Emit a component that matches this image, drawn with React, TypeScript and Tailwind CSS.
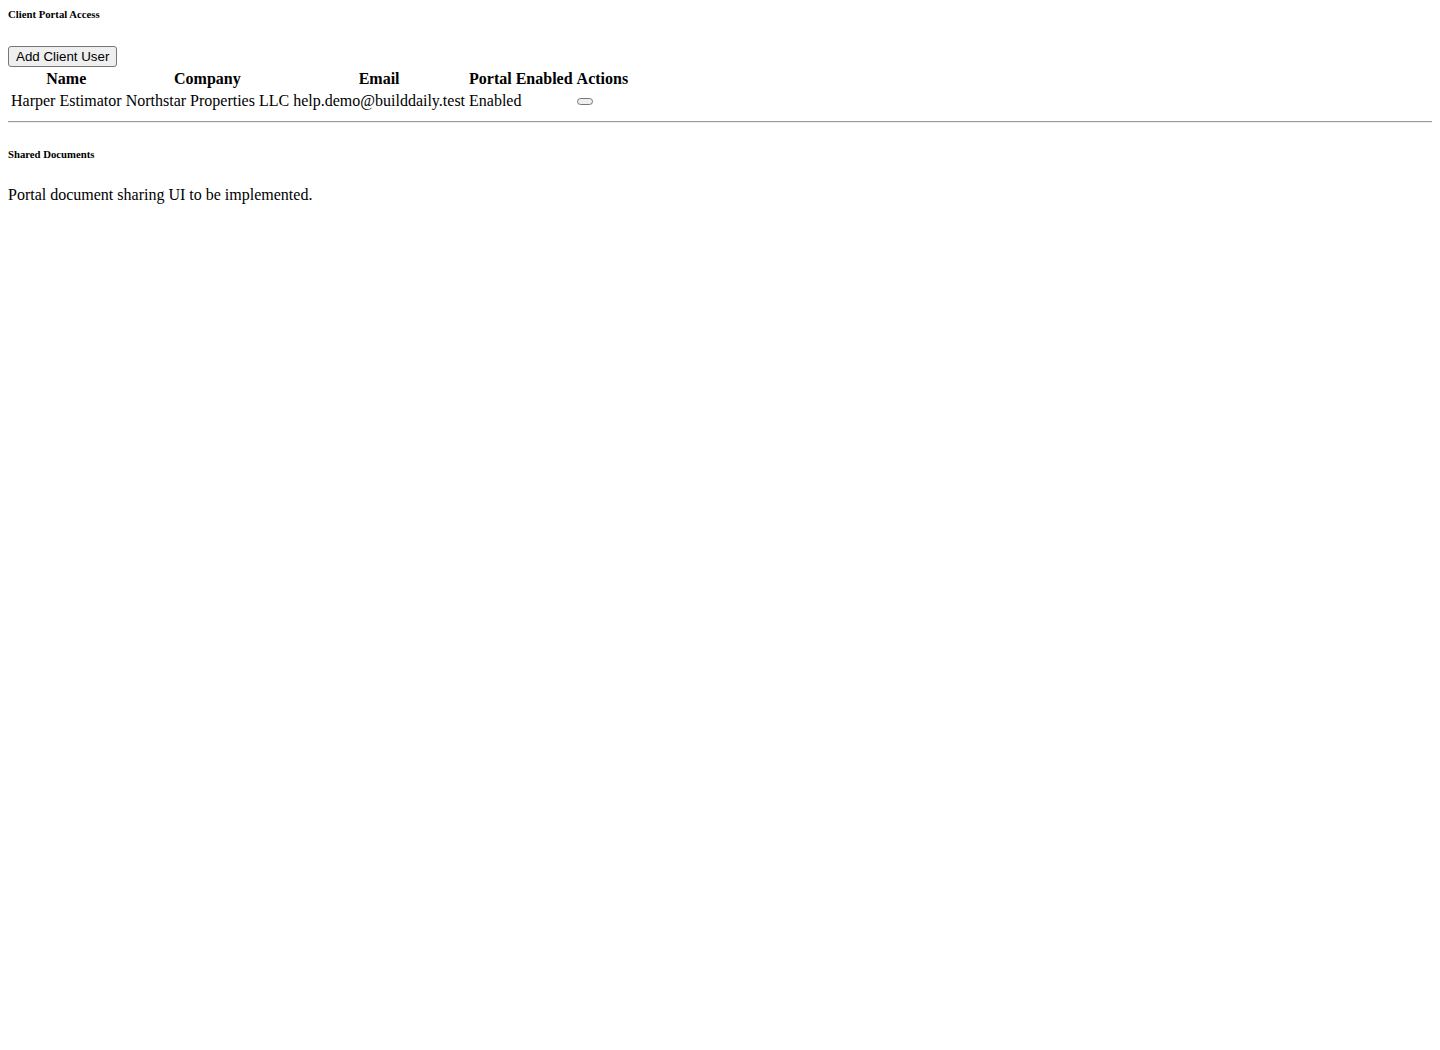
export default function App() {
  const serif = { fontFamily: '"Liberation Serif", "Times New Roman", serif' };
  return (
    <div className="min-h-screen bg-white p-2 text-black leading-[normal]" style={serif}>
      <h6 className="text-[10.72px] font-bold leading-[normal] mb-[26px]">Client Portal Access</h6>

      <div className="flex">
        <button
          className="h-[21px] rounded-[3px] border border-[#767676] bg-[#efefef] px-[7px] text-[13.33px] leading-none text-black"
          style={{ fontFamily: '"Liberation Sans", Arial, sans-serif' }}
        >
          Add Client User
        </button>
      </div>

      <table className="border-separate border-spacing-[2px] text-[16px] leading-[normal]">
        <thead>
          <tr>
            <th className="p-px text-center font-bold">Name</th>
            <th className="p-px text-center font-bold">Company</th>
            <th className="p-px text-center font-bold">Email</th>
            <th className="p-px text-center font-bold">Portal Enabled</th>
            <th className="p-px text-center font-bold">Actions</th>
          </tr>
        </thead>
        <tbody>
          <tr>
            <td className="p-px">Harper Estimator</td>
            <td className="p-px">Northstar Properties LLC</td>
            <td className="p-px">help.demo@builddaily.test</td>
            <td className="p-px">Enabled</td>
            <td className="p-px">
              <button className="relative -top-px inline-block h-[7px] w-[16px] align-middle rounded-full border border-[#767676] bg-[#efefef]" />
            </td>
          </tr>
        </tbody>
      </table>

      <hr className="my-2 border-t border-b border-t-[#9a9a9a] border-b-[#eeeeee]" />

      <h6 className="mt-[25px] mb-[26px] text-[10.72px] font-bold leading-[normal]">Shared Documents</h6>

      <p className="text-[16px]">Portal document sharing UI to be implemented.</p>
    </div>
  );
}
